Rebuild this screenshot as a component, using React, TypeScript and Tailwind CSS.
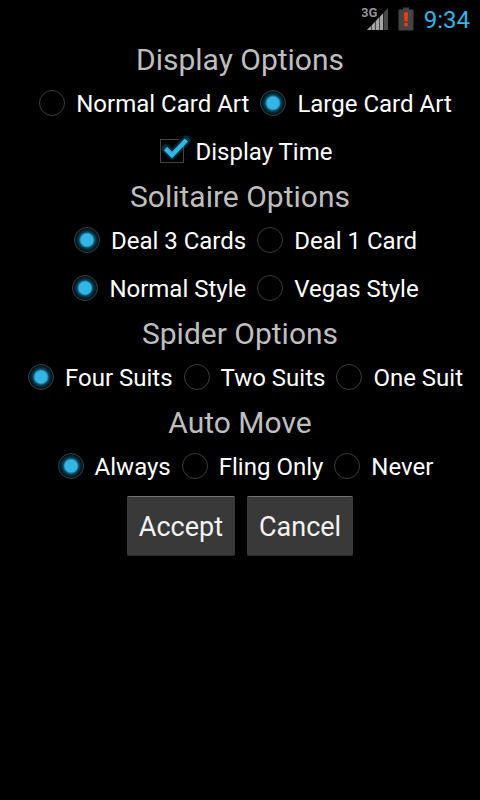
import { useState } from "react";

const RADIO_CLASS =
    "m-[11px] h-[26px] w-[26px] shrink-0 appearance-none rounded-full border border-[#3c3c3c] checked:border-[#3c4143] checked:bg-[radial-gradient(circle,#33b5e5_0,#33b5e5_6px,#1a7ca2_7px,#0a4358_8px,#06222d_10px,#020e13_12px,#000_13px)]";

type RadioRowProps = {
    name: string;
    options: string[];
    initial: string;
};

function RadioRow({ name, options, initial }: RadioRowProps) {
    const [value, setValue] = useState(initial);

    return (
        <div role="radiogroup" aria-label={name} className="flex h-12 justify-center">
            {options.map((option) => (
                <label key={option} className="flex items-center whitespace-nowrap text-2xl">
                    <input
                        type="radio"
                        name={name}
                        value={option}
                        checked={value === option}
                        onChange={() => setValue(option)}
                        className={RADIO_CLASS}
                    />
                    <span className="pt-0.5">{option}</span>
                </label>
            ))}
        </div>
    );
}

function Heading({ children }: { children: string }) {
    return <h2 className="h-[41px] text-center text-[30px] leading-[43px] text-[#bebebe]">{children}</h2>;
}

function DisplayTime() {
    const [checked, setChecked] = useState(true);

    return (
        <div className="flex h-12 justify-center">
            <label className="relative flex items-center whitespace-nowrap text-2xl">
                <input
                    type="checkbox"
                    checked={checked}
                    onChange={(e) => setChecked(e.target.checked)}
                    className="m-3 h-6 w-6 shrink-0 appearance-none border border-[#444]"
                />
                {checked && (
                    <svg
                        viewBox="0 0 48 48"
                        className="pointer-events-none absolute left-0 top-0 h-12 w-12"
                        fill="none"
                    >
                        <path d="M31 13L36 13V19" stroke="#000" strokeWidth="4" />
                        <g stroke="#0c7aa3" strokeLinecap="round" strokeLinejoin="round">
                            <path d="M18 21.5L24 28L38.5 13" strokeWidth="11" strokeOpacity="0.12" />
                            <path d="M18 21.5L24 28L38.5 13" strokeWidth="8" strokeOpacity="0.3" />
                        </g>
                        <path d="M17.5 21.5L24 28L38.5 13" stroke="#33b5e5" strokeWidth="4.6" />
                    </svg>
                )}
                <span className="pt-0.5">Display Time</span>
            </label>
        </div>
    );
}

function StatusBar() {
    return (
        <header className="flex h-[38px] items-center justify-end pr-[10px]">
            <svg viewBox="0 0 30 26" className="h-[26px] w-[30px]" aria-label="3G signal">
                <path d="M5 24L26 2V24Z" fill="#484848" />
                <path d="M5 24L9 20V24Z M10 19L13 16V24H10Z M14 15L17 11.5V24H14Z M18 10.5L21 7.5V24H18Z" fill="#a6a6a6" />
                <path d="M21.5 7V24" stroke="#222" strokeWidth="1" />
                <text x="-1" y="11" fontFamily="Roboto, sans-serif" fontSize="13" fontWeight="700" fill="#949494">
                    3G
                </text>
            </svg>
            <svg viewBox="0 0 16 24" className="ml-[6px] h-6 w-4" aria-label="Battery low">
                <path d="M5 0.5H11V2.5H15.5V23.5H0.5V2.5H5Z" fill="#444" />
                <path d="M6 5.5H10L9.4 14.5H6.6Z M6.3 16H9.7V19.3H6.3Z" fill="#ff3a0c" />
            </svg>
            <time className="ml-[10px] pt-0.5 text-2xl text-[#33b5e5]">9:34</time>
        </header>
    );
}

function ActionButton({ children }: { children: string }) {
    return (
        <button
            type="button"
            className="h-[60px] rounded-xs border-t border-b border-t-[#727272] border-b-[#2b2b2b] bg-[#393939] px-3 pt-0.5 text-[27px] text-[#f3f3f3]"
        >
            {children}
        </button>
    );
}

export default function App() {
    return (
        <div className="min-h-screen bg-black font-['Roboto',sans-serif] text-white">
            <StatusBar />
            <main>
                <Heading>Display Options</Heading>
                <RadioRow
                    name="Card art"
                    options={["Normal Card Art", "Large Card Art"]}
                    initial="Large Card Art"
                />
                <DisplayTime />

                <Heading>Solitaire Options</Heading>
                <RadioRow name="Deal" options={["Deal 3 Cards", "Deal 1 Card"]} initial="Deal 3 Cards" />
                <RadioRow name="Style" options={["Normal Style", "Vegas Style"]} initial="Normal Style" />

                <Heading>Spider Options</Heading>
                <RadioRow name="Suits" options={["Four Suits", "Two Suits", "One Suit"]} initial="Four Suits" />

                <Heading>Auto Move</Heading>
                <RadioRow name="Auto move" options={["Always", "Fling Only", "Never"]} initial="Always" />

                <div className="flex justify-center gap-3 py-[6px]">
                    <ActionButton>Accept</ActionButton>
                    <ActionButton>Cancel</ActionButton>
                </div>
            </main>
        </div>
    );
}
